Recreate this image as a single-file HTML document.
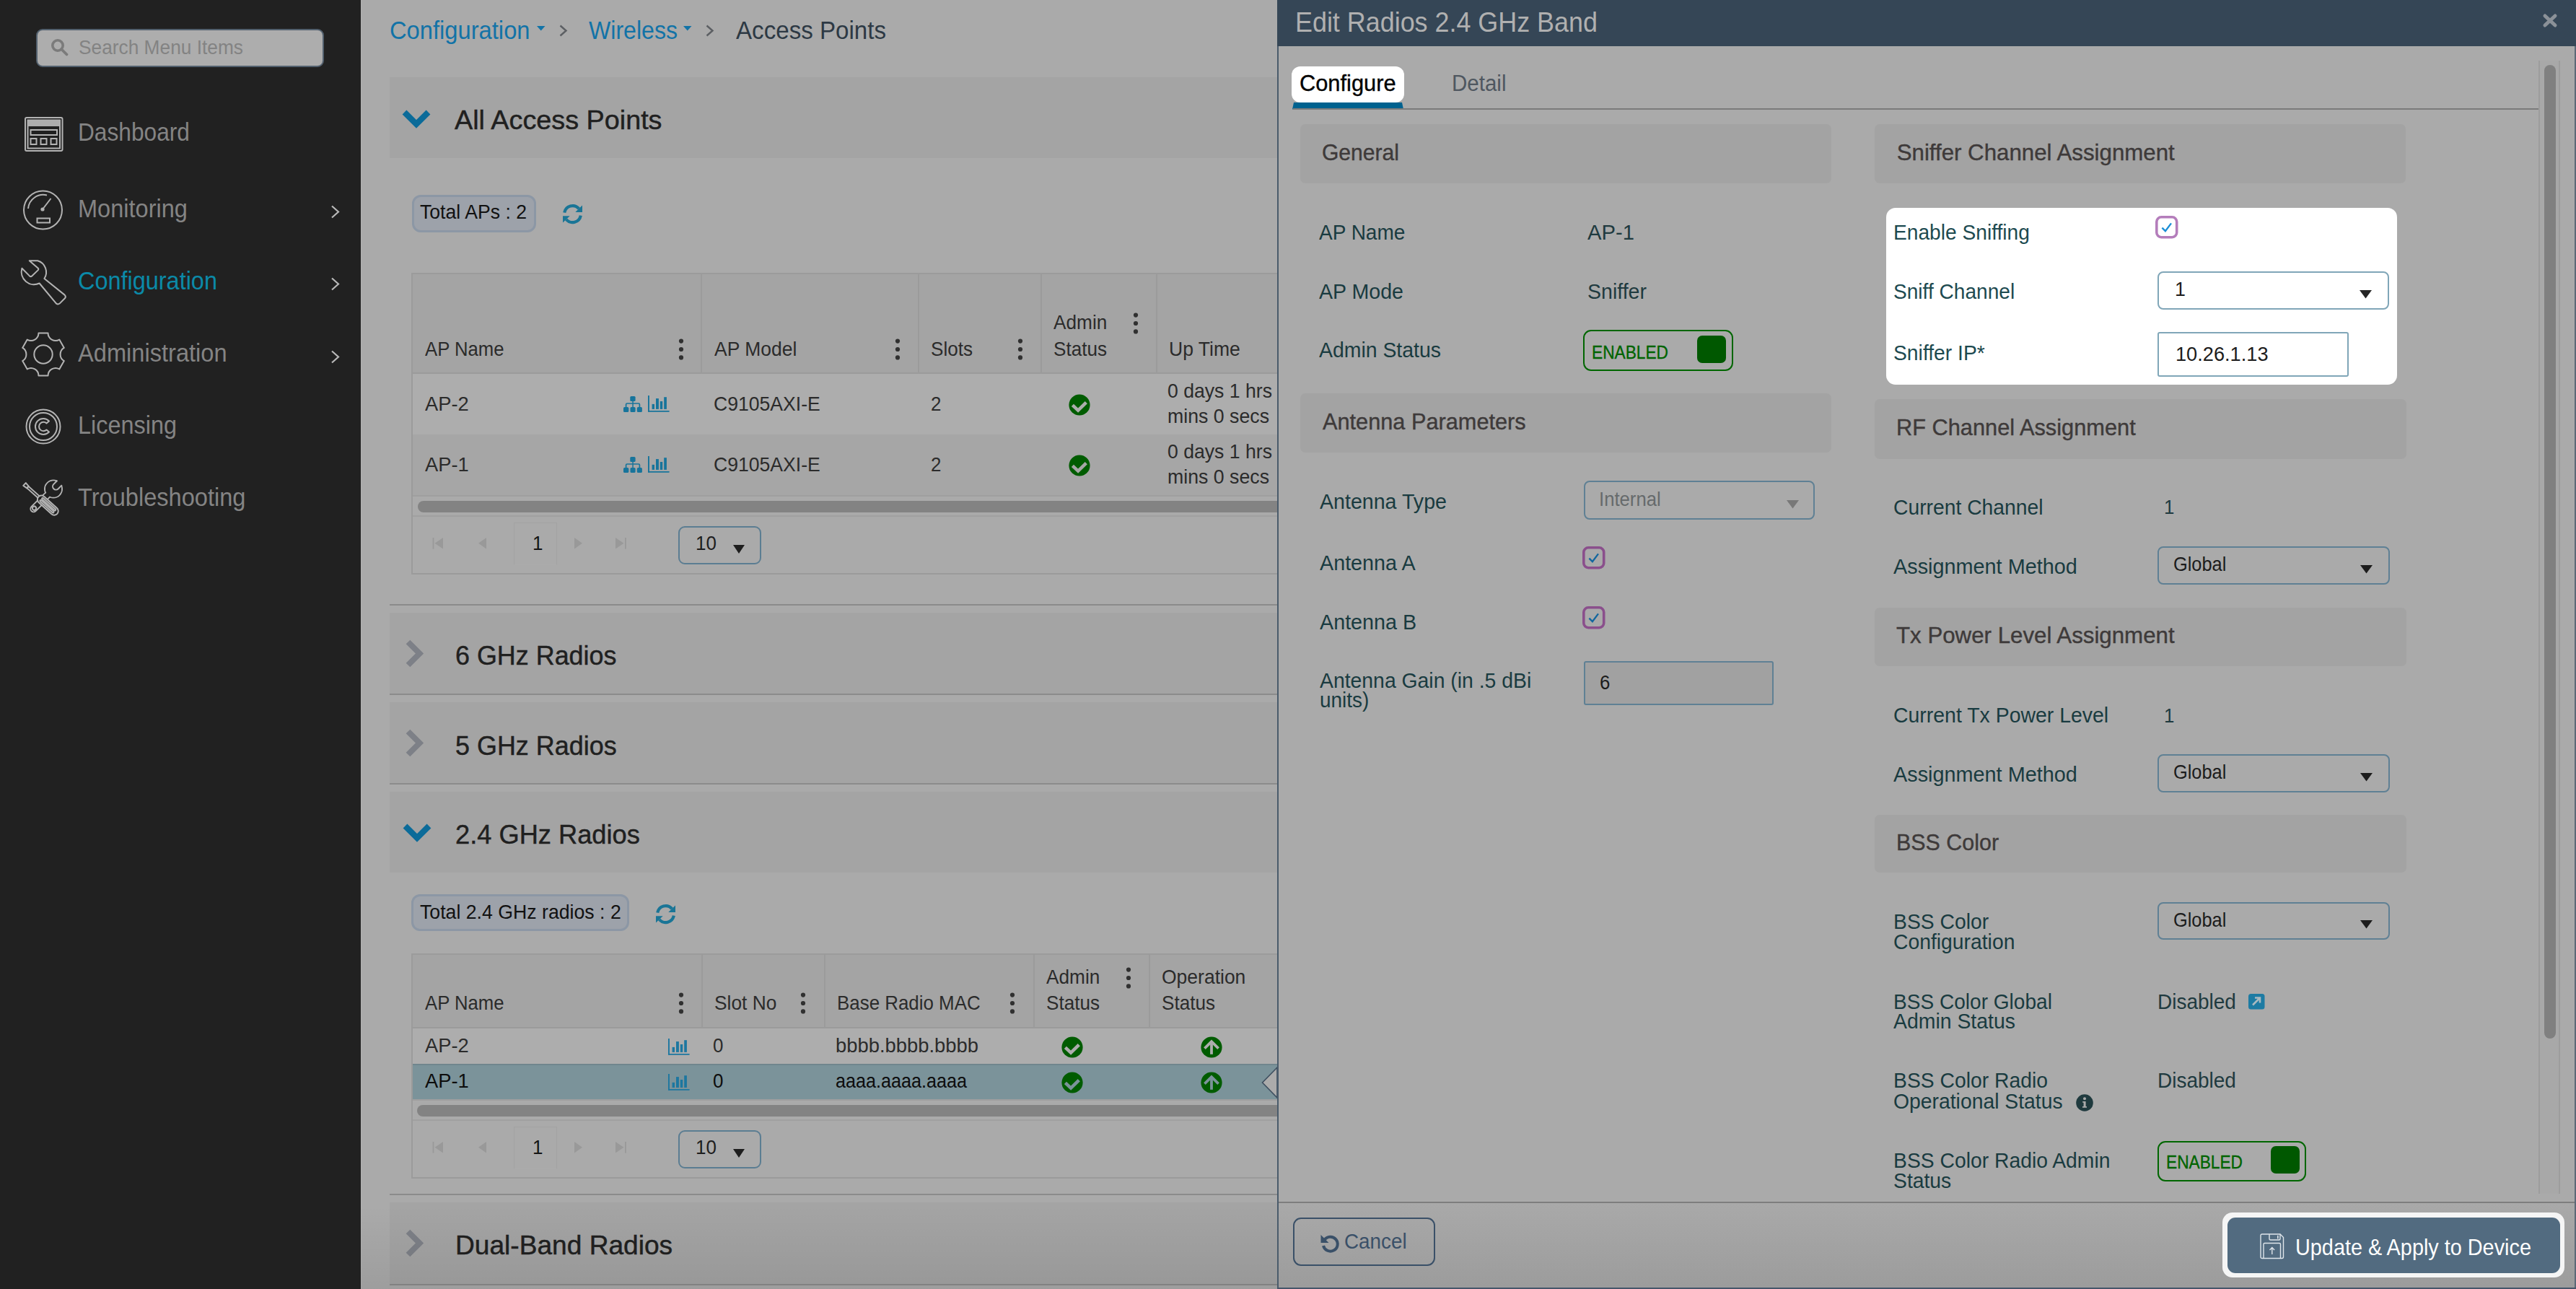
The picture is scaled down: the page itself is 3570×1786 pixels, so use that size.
<!DOCTYPE html>
<html><head><meta charset="utf-8"><title>Edit Radios 2.4 GHz Band</title>
<style>
html,body{margin:0;padding:0;}
body{width:3570px;height:1786px;overflow:hidden;position:relative;background:#aaaaaa;font-family:"Liberation Sans", sans-serif;}
.t{position:absolute;white-space:nowrap;line-height:1;font-family:"Liberation Sans", sans-serif;}
.r{position:absolute;box-sizing:border-box;}
svg.r{overflow:visible;}
</style></head><body>
<div class="r" style="left:0.0px;top:0.0px;width:500.0px;height:1786.0px;background:#212121;"></div>
<div class="r" style="left:50.0px;top:40.0px;width:399.0px;height:53.0px;background:#adadad;border:2px solid #52606e;border-radius:9px;"></div>
<svg class="r" style="left:70.0px;top:53.0px;" width="25.0" height="25.0" viewBox="0 0 25.0 25.0"><circle cx="10" cy="10" r="7.2" fill="none" stroke="#7b7b7b" stroke-width="3.6"/><line x1="15.5" y1="15.5" x2="22.5" y2="22.5" stroke="#7b7b7b" stroke-width="3.8" stroke-linecap="round"/></svg>
<div class="t" style="left:109.0px;top:51.9px;font-size:28.10px;color:#838383;font-weight:400;transform:scaleX(0.9359);transform-origin:0 0;">Search Menu Items</div>
<div class="t" style="left:108.0px;top:166.2px;font-size:34.45px;color:#848484;font-weight:400;transform:scaleX(0.9196);transform-origin:0 0;">Dashboard</div>
<div class="t" style="left:108.0px;top:272.0px;font-size:34.45px;color:#848484;font-weight:400;transform:scaleX(0.9448);transform-origin:0 0;">Monitoring</div>
<div class="t" style="left:108.0px;top:372.0px;font-size:34.45px;color:#0b8aa8;font-weight:400;transform:scaleX(0.9419);transform-origin:0 0;">Configuration</div>
<div class="t" style="left:108.0px;top:471.8px;font-size:34.45px;color:#848484;font-weight:400;transform:scaleX(0.9469);transform-origin:0 0;">Administration</div>
<div class="t" style="left:108.0px;top:571.8px;font-size:34.45px;color:#848484;font-weight:400;transform:scaleX(0.9411);transform-origin:0 0;">Licensing</div>
<div class="t" style="left:108.0px;top:671.8px;font-size:34.45px;color:#848484;font-weight:400;transform:scaleX(0.9460);transform-origin:0 0;">Troubleshooting</div>
<svg class="r" style="left:34.0px;top:162.0px;" width="54.0" height="48.0" viewBox="0 0 54.0 48.0"><rect x="1" y="1" width="51.5" height="46" rx="2" fill="none" stroke="#b3b3b3" stroke-width="2"/><rect x="4.5" y="4.5" width="44.5" height="39" fill="none" stroke="#b3b3b3" stroke-width="2" stroke-width="1.6"/><rect x="4.5" y="4.5" width="44.5" height="8.5" fill="#adadad"/><rect x="8.5" y="18" width="36.5" height="7" fill="none" stroke="#b3b3b3" stroke-width="2" stroke-width="1.6"/><rect x="8.5" y="30" width="8" height="8" fill="none" stroke="#b3b3b3" stroke-width="2" stroke-width="1.6"/><rect x="22.5" y="30" width="8" height="8" fill="none" stroke="#b3b3b3" stroke-width="2" stroke-width="1.6"/><rect x="36.5" y="30" width="8" height="8" fill="none" stroke="#b3b3b3" stroke-width="2" stroke-width="1.6"/></svg>
<svg class="r" style="left:32.0px;top:263.0px;" width="56.0" height="57.0" viewBox="0 0 56.0 57.0"><circle cx="27.5" cy="28" r="26.5" fill="none" stroke="#b3b3b3" stroke-width="2"/><path d="M7 26 A21 21 0 0 1 33 7.5" fill="none" stroke="#b3b3b3" stroke-width="2" stroke-width="2.4"/><line x1="27" y1="27" x2="38.5" y2="12" fill="none" stroke="#b3b3b3" stroke-width="2" stroke-width="2"/><circle cx="27" cy="27" r="2.6" fill="#b3b3b3"/><rect x="19.5" y="39.5" width="17.5" height="6" fill="none" stroke="#b3b3b3" stroke-width="2" stroke-width="2"/></svg>
<svg class="r" style="left:30.0px;top:360.0px;" width="62.0" height="63.0" viewBox="0 0 62.0 63.0"><path d="M10.75 1.2 L22.2 1.2 A16.5 16.5 0 0 1 31.4 26 L59.6 48.6 Q61.8 50.8 60.2 53 L52.6 60.6 Q50.4 62.4 48 60.6 L24.6 32.5 A17.5 17.5 0 0 1 0.4 11.8 L11 22.4 Q12.6 23.9 14.2 22.4 L22.6 14.4 Q24 12.9 22.6 11.5 Z" fill="none" stroke="#b3b3b3" stroke-width="2" stroke-linejoin="round"/></svg>
<svg class="r" style="left:30.0px;top:461.0px;" width="61.0" height="61.0" viewBox="0 0 61.0 61.0"><path d="M23.46 0.52 L36.54 0.52 A10.5 10.5 0 0 0 52.27 9.60 L58.80 20.92 A10.5 10.5 0 0 0 58.80 39.08 L52.27 50.40 A10.5 10.5 0 0 0 36.54 59.48 L23.46 59.48 A10.5 10.5 0 0 0 7.73 50.40 L1.20 39.08 A10.5 10.5 0 0 0 1.20 20.92 L7.73 9.60 A10.5 10.5 0 0 0 23.46 0.52 Z" fill="none" stroke="#b3b3b3" stroke-width="2" stroke-linejoin="round"/><circle cx="30" cy="30" r="12.7" fill="none" stroke="#b3b3b3" stroke-width="2"/></svg>
<svg class="r" style="left:35.0px;top:565.0px;" width="50.0" height="52.0" viewBox="0 0 50.0 52.0"><circle cx="25" cy="26" r="23.5" fill="none" stroke="#b3b3b3" stroke-width="2"/><circle cx="25" cy="26" r="19" fill="none" stroke="#b3b3b3" stroke-width="2" stroke-width="1.8"/><path d="M33 18.5 A11 11 0 1 0 33 33.5 L29.5 30.5 A6.2 6.2 0 1 1 29.5 21.5 Z" fill="none" stroke="#b3b3b3" stroke-width="2" stroke-width="1.8" stroke-linejoin="round"/></svg>
<svg class="r" style="left:32.0px;top:664.0px;" width="56.0" height="53.0" viewBox="0 0 56.0 53.0"><g transform="translate(42,13.6) rotate(135)"><circle cx="0" cy="0" r="12" fill="none" stroke="#b3b3b3" stroke-width="2"/><rect x="6" y="-4.2" width="37" height="8.4" rx="4.2" fill="none" stroke="#b3b3b3" stroke-width="2"/><circle cx="0" cy="0" r="11" fill="#212121"/><rect x="5" y="-3.2" width="37" height="6.4" rx="3.2" fill="#212121"/><path d="M-14 -4.5 L-5 -4.5 A4.5 4.5 0 0 1 -5 4.5 L-14 4.5 Z" fill="#212121"/><path d="M-12.2 -4.5 L-5 -4.5 A4.5 4.5 0 0 1 -5 4.5 L-12.2 4.5" fill="none" stroke="#b3b3b3" stroke-width="2"/><circle cx="37.5" cy="0" r="2.6" fill="none" stroke="#b3b3b3" stroke-width="2" stroke-width="1.8"/></g><g transform="translate(2,7) rotate(42)"><path d="M0 -2.6 L6 -1.8 L6 1.8 L0 2.6 Z" fill="none" stroke="#b3b3b3" stroke-width="2" stroke-linejoin="round"/><rect x="6" y="-1.6" width="22" height="3.2" fill="none" stroke="#b3b3b3" stroke-width="2" stroke-width="1.8"/><rect x="26" y="-5.6" width="35" height="11.2" rx="5.6" fill="#212121" fill="none" stroke="#b3b3b3" stroke-width="2"/><rect x="31" y="-3.2" width="25" height="2.4" rx="1.2" fill="none" stroke="#b3b3b3" stroke-width="2" stroke-width="1.5"/><rect x="31" y="0.8" width="25" height="2.4" rx="1.2" fill="none" stroke="#b3b3b3" stroke-width="2" stroke-width="1.5"/></g></svg>
<svg class="r" style="left:458.0px;top:284.0px;" width="14.0" height="19.0" viewBox="0 0 14.0 19.0"><polyline points="2,1.5 11,9.5 2,17.5" fill="none" stroke="#b9b9b9" stroke-width="2.2"/></svg>
<svg class="r" style="left:458.0px;top:384.0px;" width="14.0" height="19.0" viewBox="0 0 14.0 19.0"><polyline points="2,1.5 11,9.5 2,17.5" fill="none" stroke="#b9b9b9" stroke-width="2.2"/></svg>
<svg class="r" style="left:458.0px;top:485.0px;" width="14.0" height="19.0" viewBox="0 0 14.0 19.0"><polyline points="2,1.5 11,9.5 2,17.5" fill="none" stroke="#b9b9b9" stroke-width="2.2"/></svg>
<div class="r" style="left:500.0px;top:0.0px;width:1.0px;height:1786.0px;background:#b2b2b2;"></div>
<div class="t" style="left:540.0px;top:23.8px;font-size:35.00px;color:#1273a7;font-weight:400;transform:scaleX(0.9343);transform-origin:0 0;">Configuration</div>
<svg class="r" style="left:744.0px;top:36.0px;" width="11.5" height="6.5" viewBox="0 0 11.5 6.5"><polygon points="0,0 11.5,0 5.75,6.5" fill="#1273a7"/></svg>
<svg class="r" style="left:774.0px;top:34.0px;" width="14.0" height="18.0" viewBox="0 0 14.0 18.0"><polyline points="2.5,1.5 10.5,8.5 2.5,15.5" fill="none" stroke="#5c5f63" stroke-width="2.4"/></svg>
<div class="t" style="left:816.0px;top:23.8px;font-size:35.00px;color:#1273a7;font-weight:400;transform:scaleX(0.9166);transform-origin:0 0;">Wireless</div>
<svg class="r" style="left:947.0px;top:36.0px;" width="11.5" height="6.5" viewBox="0 0 11.5 6.5"><polygon points="0,0 11.5,0 5.75,6.5" fill="#1273a7"/></svg>
<svg class="r" style="left:977.0px;top:34.0px;" width="14.0" height="18.0" viewBox="0 0 14.0 18.0"><polyline points="2.5,1.5 10.5,8.5 2.5,15.5" fill="none" stroke="#5c5f63" stroke-width="2.4"/></svg>
<div class="t" style="left:1020.0px;top:23.8px;font-size:35.00px;color:#2d3944;font-weight:400;transform:scaleX(0.9463);transform-origin:0 0;">Access Points</div>
<div class="r" style="left:540.0px;top:107.0px;width:1232.0px;height:112.0px;background:#a4a4a4;"></div>
<svg class="r" style="left:557.0px;top:151.5px;" width="40.0" height="26.0" viewBox="0 0 40.0 26.0"><polyline points="3.5,3.5 20,20 36.5,3.5" fill="none" stroke="#0b6b99" stroke-width="8.2" stroke-linejoin="miter"/></svg>
<div class="t" style="left:630.0px;top:148.2px;font-size:37.60px;color:#202020;font-weight:400;transform:scaleX(1.0048);transform-origin:0 0;-webkit-text-stroke:0.45px #202020;">All Access Points</div>
<div class="r" style="left:571.0px;top:269.5px;width:172.0px;height:52.5px;background:#9da2aa;border:3px solid #8c97a5;border-radius:12px;"></div>
<div class="t" style="left:582.0px;top:280.4px;font-size:28.10px;color:#111;font-weight:400;transform:scaleX(0.9477);transform-origin:0 0;">Total APs : 2</div>
<svg class="r" style="left:779.8px;top:282.9px;" width="27.0" height="27.0" viewBox="0 0 27.0 27.0"><path d="M2.2 11.6 A11.5 11.5 0 0 1 22.3 6.2" fill="none" stroke="#1a7596" stroke-width="4.2"/><path d="M27 1.6 L27 11 L17.3 11 Z" fill="#1a7596"/><path d="M24.8 15.6 A11.5 11.5 0 0 1 4.7 21" fill="none" stroke="#1a7596" stroke-width="4.2"/><path d="M0 25.6 L0 16.2 L9.7 16.2 Z" fill="#1a7596"/></svg>
<div class="r" style="left:570.0px;top:378.0px;width:1202.0px;height:418.0px;border:2px solid #9b9b9b;border-right:none;"></div>
<div class="r" style="left:572.0px;top:380.0px;width:1200.0px;height:137.0px;background:#a4a4a4;"></div>
<div class="r" style="left:572.0px;top:516.0px;width:1200.0px;height:2.0px;background:#9b9b9b;"></div>
<div class="r" style="left:971.0px;top:380.0px;width:2.0px;height:137.0px;background:#9b9b9b;"></div>
<div class="r" style="left:1272.0px;top:380.0px;width:2.0px;height:137.0px;background:#9b9b9b;"></div>
<div class="r" style="left:1441.7px;top:380.0px;width:2.0px;height:137.0px;background:#9b9b9b;"></div>
<div class="r" style="left:1601.7px;top:380.0px;width:2.0px;height:137.0px;background:#9b9b9b;"></div>
<div class="r" style="left:572.0px;top:518.0px;width:1200.0px;height:83.5px;background:#adadad;"></div>
<div class="r" style="left:572.0px;top:601.5px;width:1200.0px;height:84.5px;background:#a6a6a6;"></div>
<div class="t" style="left:588.5px;top:469.6px;font-size:27.60px;color:#2b2b2b;font-weight:400;transform:scaleX(0.9312);transform-origin:0 0;">AP Name</div>
<div class="t" style="left:989.7px;top:469.6px;font-size:27.60px;color:#2b2b2b;font-weight:400;transform:scaleX(0.9591);transform-origin:0 0;">AP Model</div>
<div class="t" style="left:1290.0px;top:469.6px;font-size:27.60px;color:#2b2b2b;font-weight:400;transform:scaleX(0.9453);transform-origin:0 0;">Slots</div>
<div class="t" style="left:1460.0px;top:433.0px;font-size:27.60px;color:#2b2b2b;font-weight:400;transform:scaleX(0.9496);transform-origin:0 0;">Admin</div>
<div class="t" style="left:1460.0px;top:469.6px;font-size:27.60px;color:#2b2b2b;font-weight:400;transform:scaleX(0.9457);transform-origin:0 0;">Status</div>
<div class="t" style="left:1619.6px;top:469.6px;font-size:27.60px;color:#2b2b2b;font-weight:400;transform:scaleX(0.9616);transform-origin:0 0;">Up Time</div>
<svg class="r" style="left:939.7px;top:470.0px;" width="8.0" height="28.0" viewBox="0 0 8.0 28.0"><circle cx="4" cy="2.6" r="3.1" fill="#303030"/><circle cx="4" cy="14" r="3.1" fill="#303030"/><circle cx="4" cy="25.4" r="3.1" fill="#303030"/></svg>
<svg class="r" style="left:1239.7px;top:470.0px;" width="8.0" height="28.0" viewBox="0 0 8.0 28.0"><circle cx="4" cy="2.6" r="3.1" fill="#303030"/><circle cx="4" cy="14" r="3.1" fill="#303030"/><circle cx="4" cy="25.4" r="3.1" fill="#303030"/></svg>
<svg class="r" style="left:1410.0px;top:470.0px;" width="8.0" height="28.0" viewBox="0 0 8.0 28.0"><circle cx="4" cy="2.6" r="3.1" fill="#303030"/><circle cx="4" cy="14" r="3.1" fill="#303030"/><circle cx="4" cy="25.4" r="3.1" fill="#303030"/></svg>
<svg class="r" style="left:1569.6px;top:434.3px;" width="8.0" height="28.0" viewBox="0 0 8.0 28.0"><circle cx="4" cy="2.6" r="3.1" fill="#303030"/><circle cx="4" cy="14" r="3.1" fill="#303030"/><circle cx="4" cy="25.4" r="3.1" fill="#303030"/></svg>
<div class="t" style="left:588.5px;top:545.6px;font-size:27.60px;color:#2b2b2b;font-weight:400;transform:scaleX(0.9909);transform-origin:0 0;">AP-2</div>
<svg class="r" style="left:864.3px;top:548.7px;" width="27.0" height="23.0" viewBox="0 0 27.0 23.0"><rect x="9.3" y="0" width="7.3" height="7.1" rx="1.6" fill="#17749b"/><rect x="0" y="14.9" width="7.3" height="7.1" rx="1.6" fill="#17749b"/><rect x="9.5" y="14.9" width="7.1" height="7.1" rx="1.6" fill="#17749b"/><rect x="18.8" y="14.9" width="7.1" height="7.1" rx="1.6" fill="#17749b"/><rect x="12.3" y="6" width="1.5" height="10" fill="#17749b"/><path d="M3.6 16 L3.6 11.5 Q3.6 10 5 10 L21 10 Q22.4 10 22.4 11.5 L22.4 16" fill="none" stroke="#17749b" stroke-width="1.7"/></svg>
<svg class="r" style="left:898.0px;top:548.0px;" width="30.0" height="23.0" viewBox="0 0 30.0 23.0"><rect x="0" y="0" width="1.9" height="22.7" fill="#17749b"/><rect x="0" y="20.9" width="29.8" height="1.8" rx="0.9" fill="#17749b"/><rect x="5.6" y="11.9" width="3.4" height="7" fill="#17749b"/><rect x="11" y="4.1" width="3.9" height="14.8" fill="#17749b"/><rect x="16.8" y="8" width="3.4" height="10.9" fill="#17749b"/><rect x="22.2" y="2.2" width="3.7" height="16.7" fill="#17749b"/></svg>
<div class="t" style="left:989.0px;top:545.6px;font-size:27.60px;color:#2b2b2b;font-weight:400;transform:scaleX(0.9634);transform-origin:0 0;">C9105AXI-E</div>
<div class="t" style="left:1290.0px;top:545.6px;font-size:27.60px;color:#2b2b2b;font-weight:400;transform:scaleX(0.9400);transform-origin:0 0;">2</div>
<svg class="r" style="left:1480.0px;top:544.5px;" width="32.0" height="32.0" viewBox="0 0 32.0 32.0"><circle cx="16" cy="16" r="14.6" fill="#005c00"/><polyline points="6.4,16.3 14.1,23.6 25.3,12.7" fill="none" stroke="#adadad" stroke-width="4.6"/></svg>
<div class="t" style="left:1618.0px;top:528.4px;font-size:27.60px;color:#2b2b2b;font-weight:400;transform:scaleX(0.9645);transform-origin:0 0;">0 days 1 hrs</div>
<div class="t" style="left:1618.0px;top:562.6px;font-size:27.60px;color:#2b2b2b;font-weight:400;transform:scaleX(0.9678);transform-origin:0 0;">mins 0 secs</div>
<div class="t" style="left:588.5px;top:629.6px;font-size:27.60px;color:#2b2b2b;font-weight:400;transform:scaleX(0.9909);transform-origin:0 0;">AP-1</div>
<svg class="r" style="left:864.3px;top:632.7px;" width="27.0" height="23.0" viewBox="0 0 27.0 23.0"><rect x="9.3" y="0" width="7.3" height="7.1" rx="1.6" fill="#17749b"/><rect x="0" y="14.9" width="7.3" height="7.1" rx="1.6" fill="#17749b"/><rect x="9.5" y="14.9" width="7.1" height="7.1" rx="1.6" fill="#17749b"/><rect x="18.8" y="14.9" width="7.1" height="7.1" rx="1.6" fill="#17749b"/><rect x="12.3" y="6" width="1.5" height="10" fill="#17749b"/><path d="M3.6 16 L3.6 11.5 Q3.6 10 5 10 L21 10 Q22.4 10 22.4 11.5 L22.4 16" fill="none" stroke="#17749b" stroke-width="1.7"/></svg>
<svg class="r" style="left:898.0px;top:632.0px;" width="30.0" height="23.0" viewBox="0 0 30.0 23.0"><rect x="0" y="0" width="1.9" height="22.7" fill="#17749b"/><rect x="0" y="20.9" width="29.8" height="1.8" rx="0.9" fill="#17749b"/><rect x="5.6" y="11.9" width="3.4" height="7" fill="#17749b"/><rect x="11" y="4.1" width="3.9" height="14.8" fill="#17749b"/><rect x="16.8" y="8" width="3.4" height="10.9" fill="#17749b"/><rect x="22.2" y="2.2" width="3.7" height="16.7" fill="#17749b"/></svg>
<div class="t" style="left:989.0px;top:629.6px;font-size:27.60px;color:#2b2b2b;font-weight:400;transform:scaleX(0.9634);transform-origin:0 0;">C9105AXI-E</div>
<div class="t" style="left:1290.0px;top:629.6px;font-size:27.60px;color:#2b2b2b;font-weight:400;transform:scaleX(0.9400);transform-origin:0 0;">2</div>
<svg class="r" style="left:1480.0px;top:628.5px;" width="32.0" height="32.0" viewBox="0 0 32.0 32.0"><circle cx="16" cy="16" r="14.6" fill="#005c00"/><polyline points="6.4,16.3 14.1,23.6 25.3,12.7" fill="none" stroke="#a6a6a6" stroke-width="4.6"/></svg>
<div class="t" style="left:1618.0px;top:612.4px;font-size:27.60px;color:#2b2b2b;font-weight:400;transform:scaleX(0.9645);transform-origin:0 0;">0 days 1 hrs</div>
<div class="t" style="left:1618.0px;top:646.6px;font-size:27.60px;color:#2b2b2b;font-weight:400;transform:scaleX(0.9678);transform-origin:0 0;">mins 0 secs</div>
<div class="r" style="left:572.0px;top:686.0px;width:1200.0px;height:2.0px;background:#9f9f9f;"></div>
<div class="r" style="left:578.5px;top:694.0px;width:1193.5px;height:16.0px;background:#838383;border-radius:8px 0 0 8px;"></div>
<div class="r" style="left:572.0px;top:714.0px;width:1200.0px;height:2.0px;background:#a0a0a0;"></div>
<svg class="r" style="left:599.0px;top:745.0px;" width="16.0" height="16.0" viewBox="0 0 16.0 16.0"><rect x="0.6" y="0" width="1.8" height="15.6" fill="#999999"/><polygon points="15,0 3.5,7.8 15,15.6" fill="#999999"/></svg>
<svg class="r" style="left:663.0px;top:745.0px;" width="12.0" height="16.0" viewBox="0 0 12.0 16.0"><polygon points="11,0 0,7.8 11,15.6" fill="#999999"/></svg>
<div class="r" style="left:712.0px;top:724.0px;width:59.5px;height:59.0px;border:1px solid #a2a2a2;border-bottom-color:#acacac;"></div>
<div class="t" style="left:737.5px;top:738.6px;font-size:27.60px;color:#151515;font-weight:400;transform:scaleX(0.9400);transform-origin:0 0;">1</div>
<svg class="r" style="left:796.0px;top:745.0px;" width="12.0" height="16.0" viewBox="0 0 12.0 16.0"><polygon points="0,0 11,7.8 0,15.6" fill="#999999"/></svg>
<svg class="r" style="left:853.0px;top:745.0px;" width="16.0" height="16.0" viewBox="0 0 16.0 16.0"><polygon points="0,0 11.5,7.8 0,15.6" fill="#999999"/><rect x="13" y="0" width="1.8" height="15.6" fill="#999999"/></svg>
<div class="r" style="left:939.5px;top:729.0px;width:115.5px;height:53.0px;border:2px solid #5b7d92;border-radius:9px;"></div>
<div class="t" style="left:963.6px;top:739.0px;font-size:27.60px;color:#1e1e1e;font-weight:400;transform:scaleX(0.9400);transform-origin:0 0;">10</div>
<svg class="r" style="left:1016.0px;top:755.0px;" width="16.0" height="12.0" viewBox="0 0 16.0 12.0"><polygon points="0,0 16,0 8.0,12" fill="#1e1e1e"/></svg>
<div class="r" style="left:540.0px;top:837.0px;width:1232.0px;height:2.0px;background:#8b8b8b;"></div>
<div class="r" style="left:540.0px;top:849.0px;width:1232.0px;height:112.0px;background:#a4a4a4;"></div>
<div class="r" style="left:540.0px;top:961.0px;width:1232.0px;height:2.0px;background:#8b8b8b;"></div>
<svg class="r" style="left:562.0px;top:886.0px;" width="26.0" height="40.0" viewBox="0 0 26.0 40.0"><polyline points="3.5,3.5 19.5,19.5 3.5,35.5" fill="none" stroke="#7d8087" stroke-width="8" stroke-linejoin="miter"/></svg>
<div class="t" style="left:631.4px;top:890.2px;font-size:37.60px;color:#202020;font-weight:400;transform:scaleX(0.9553);transform-origin:0 0;-webkit-text-stroke:0.45px #202020;">6 GHz Radios</div>
<div class="r" style="left:540.0px;top:973.0px;width:1232.0px;height:112.0px;background:#a4a4a4;"></div>
<div class="r" style="left:540.0px;top:1085.0px;width:1232.0px;height:2.0px;background:#8b8b8b;"></div>
<svg class="r" style="left:562.0px;top:1010.0px;" width="26.0" height="40.0" viewBox="0 0 26.0 40.0"><polyline points="3.5,3.5 19.5,19.5 3.5,35.5" fill="none" stroke="#7d8087" stroke-width="8" stroke-linejoin="miter"/></svg>
<div class="t" style="left:631.0px;top:1014.5px;font-size:37.60px;color:#202020;font-weight:400;transform:scaleX(0.9561);transform-origin:0 0;-webkit-text-stroke:0.45px #202020;">5 GHz Radios</div>
<div class="r" style="left:540.0px;top:1097.0px;width:1232.0px;height:112.0px;background:#a4a4a4;"></div>
<svg class="r" style="left:557.6px;top:1141.0px;" width="40.0" height="26.0" viewBox="0 0 40.0 26.0"><polyline points="3.5,3.5 20,20 36.5,3.5" fill="none" stroke="#0b6b99" stroke-width="8.2" stroke-linejoin="miter"/></svg>
<div class="t" style="left:631.0px;top:1138.0px;font-size:37.60px;color:#202020;font-weight:400;transform:scaleX(0.9646);transform-origin:0 0;-webkit-text-stroke:0.45px #202020;">2.4 GHz Radios</div>
<div class="r" style="left:570.0px;top:1238.6px;width:302.4px;height:51.7px;background:#9da2aa;border:3px solid #8c97a5;border-radius:12px;"></div>
<div class="t" style="left:581.7px;top:1250.0px;font-size:28.10px;color:#111;font-weight:400;transform:scaleX(0.9495);transform-origin:0 0;">Total 2.4 GHz radios : 2</div>
<svg class="r" style="left:908.5px;top:1252.5px;" width="27.0" height="27.0" viewBox="0 0 27.0 27.0"><path d="M2.2 11.6 A11.5 11.5 0 0 1 22.3 6.2" fill="none" stroke="#1a7596" stroke-width="4.2"/><path d="M27 1.6 L27 11 L17.3 11 Z" fill="#1a7596"/><path d="M24.8 15.6 A11.5 11.5 0 0 1 4.7 21" fill="none" stroke="#1a7596" stroke-width="4.2"/><path d="M0 25.6 L0 16.2 L9.7 16.2 Z" fill="#1a7596"/></svg>
<div class="r" style="left:570.0px;top:1321.4px;width:1202.0px;height:311.6px;border:2px solid #9b9b9b;border-right:none;"></div>
<div class="r" style="left:572.0px;top:1323.4px;width:1200.0px;height:100.3px;background:#a4a4a4;"></div>
<div class="r" style="left:572.0px;top:1422.7px;width:1200.0px;height:2.0px;background:#9b9b9b;"></div>
<div class="r" style="left:971.8px;top:1323.4px;width:2.0px;height:100.3px;background:#9b9b9b;"></div>
<div class="r" style="left:1141.5px;top:1323.4px;width:2.0px;height:100.3px;background:#9b9b9b;"></div>
<div class="r" style="left:1431.7px;top:1323.4px;width:2.0px;height:100.3px;background:#9b9b9b;"></div>
<div class="r" style="left:1591.7px;top:1323.4px;width:2.0px;height:100.3px;background:#9b9b9b;"></div>
<div class="r" style="left:572.0px;top:1424.7px;width:1200.0px;height:49.3px;background:#adadad;"></div>
<div class="r" style="left:572.0px;top:1474.0px;width:1200.0px;height:49.0px;background:#7b939a;"></div>
<div class="r" style="left:572.0px;top:1474.0px;width:1200.0px;height:1.5px;background:#70868d;"></div>
<div class="t" style="left:588.5px;top:1375.6px;font-size:27.60px;color:#2b2b2b;font-weight:400;transform:scaleX(0.9312);transform-origin:0 0;">AP Name</div>
<div class="t" style="left:989.7px;top:1375.6px;font-size:27.60px;color:#2b2b2b;font-weight:400;transform:scaleX(0.9536);transform-origin:0 0;">Slot No</div>
<div class="t" style="left:1160.0px;top:1375.6px;font-size:27.60px;color:#2b2b2b;font-weight:400;transform:scaleX(0.9388);transform-origin:0 0;">Base Radio MAC</div>
<div class="t" style="left:1450.0px;top:1340.0px;font-size:27.60px;color:#2b2b2b;font-weight:400;transform:scaleX(0.9496);transform-origin:0 0;">Admin</div>
<div class="t" style="left:1450.0px;top:1375.6px;font-size:27.60px;color:#2b2b2b;font-weight:400;transform:scaleX(0.9457);transform-origin:0 0;">Status</div>
<div class="t" style="left:1609.6px;top:1340.0px;font-size:27.60px;color:#2b2b2b;font-weight:400;transform:scaleX(0.9601);transform-origin:0 0;">Operation</div>
<div class="t" style="left:1609.6px;top:1375.6px;font-size:27.60px;color:#2b2b2b;font-weight:400;transform:scaleX(0.9457);transform-origin:0 0;">Status</div>
<svg class="r" style="left:939.7px;top:1376.0px;" width="8.0" height="28.0" viewBox="0 0 8.0 28.0"><circle cx="4" cy="2.6" r="3.1" fill="#303030"/><circle cx="4" cy="14" r="3.1" fill="#303030"/><circle cx="4" cy="25.4" r="3.1" fill="#303030"/></svg>
<svg class="r" style="left:1109.4px;top:1376.0px;" width="8.0" height="28.0" viewBox="0 0 8.0 28.0"><circle cx="4" cy="2.6" r="3.1" fill="#303030"/><circle cx="4" cy="14" r="3.1" fill="#303030"/><circle cx="4" cy="25.4" r="3.1" fill="#303030"/></svg>
<svg class="r" style="left:1399.4px;top:1376.0px;" width="8.0" height="28.0" viewBox="0 0 8.0 28.0"><circle cx="4" cy="2.6" r="3.1" fill="#303030"/><circle cx="4" cy="14" r="3.1" fill="#303030"/><circle cx="4" cy="25.4" r="3.1" fill="#303030"/></svg>
<svg class="r" style="left:1559.7px;top:1341.0px;" width="8.0" height="28.0" viewBox="0 0 8.0 28.0"><circle cx="4" cy="2.6" r="3.1" fill="#303030"/><circle cx="4" cy="14" r="3.1" fill="#303030"/><circle cx="4" cy="25.4" r="3.1" fill="#303030"/></svg>
<div class="t" style="left:588.5px;top:1435.1px;font-size:27.60px;color:#2b2b2b;font-weight:400;transform:scaleX(0.9909);transform-origin:0 0;">AP-2</div>
<svg class="r" style="left:926.0px;top:1438.5px;" width="30.0" height="23.0" viewBox="0 0 30.0 23.0"><rect x="0" y="0" width="1.9" height="22.7" fill="#1c77a0"/><rect x="0" y="20.9" width="29.8" height="1.8" rx="0.9" fill="#1c77a0"/><rect x="5.6" y="11.9" width="3.4" height="7" fill="#1c77a0"/><rect x="11" y="4.1" width="3.9" height="14.8" fill="#1c77a0"/><rect x="16.8" y="8" width="3.4" height="10.9" fill="#1c77a0"/><rect x="22.2" y="2.2" width="3.7" height="16.7" fill="#1c77a0"/></svg>
<div class="t" style="left:988.4px;top:1435.1px;font-size:27.60px;color:#2b2b2b;font-weight:400;transform:scaleX(0.9400);transform-origin:0 0;">0</div>
<div class="t" style="left:1158.0px;top:1435.1px;font-size:27.60px;color:#2b2b2b;font-weight:400;transform:scaleX(0.9924);transform-origin:0 0;">bbbb.bbbb.bbbb</div>
<svg class="r" style="left:1470.3px;top:1434.5px;" width="32.0" height="32.0" viewBox="0 0 32.0 32.0"><circle cx="16" cy="16" r="14.6" fill="#005c00"/><polyline points="6.4,16.3 14.1,23.6 25.3,12.7" fill="none" stroke="#adadad" stroke-width="4.6"/></svg>
<svg class="r" style="left:1663.2px;top:1434.5px;" width="32.0" height="32.0" viewBox="0 0 32.0 32.0"><circle cx="16" cy="16" r="14.6" fill="#005c00"/><polyline points="6.4,17.6 16,8.2 25.6,17.6" fill="none" stroke="#adadad" stroke-width="3.8"/><line x1="16" y1="9" x2="16" y2="25.8" stroke="#adadad" stroke-width="3.8"/></svg>
<div class="t" style="left:588.5px;top:1484.3px;font-size:27.60px;color:#0d0d0d;font-weight:400;transform:scaleX(0.9909);transform-origin:0 0;">AP-1</div>
<svg class="r" style="left:926.0px;top:1487.7px;" width="30.0" height="23.0" viewBox="0 0 30.0 23.0"><rect x="0" y="0" width="1.9" height="22.7" fill="#1c77a0"/><rect x="0" y="20.9" width="29.8" height="1.8" rx="0.9" fill="#1c77a0"/><rect x="5.6" y="11.9" width="3.4" height="7" fill="#1c77a0"/><rect x="11" y="4.1" width="3.9" height="14.8" fill="#1c77a0"/><rect x="16.8" y="8" width="3.4" height="10.9" fill="#1c77a0"/><rect x="22.2" y="2.2" width="3.7" height="16.7" fill="#1c77a0"/></svg>
<div class="t" style="left:988.4px;top:1484.3px;font-size:27.60px;color:#0d0d0d;font-weight:400;transform:scaleX(0.9400);transform-origin:0 0;">0</div>
<div class="t" style="left:1158.0px;top:1484.3px;font-size:27.60px;color:#0d0d0d;font-weight:400;transform:scaleX(0.9120);transform-origin:0 0;">aaaa.aaaa.aaaa</div>
<svg class="r" style="left:1470.3px;top:1483.7px;" width="32.0" height="32.0" viewBox="0 0 32.0 32.0"><circle cx="16" cy="16" r="14.6" fill="#005c00"/><polyline points="6.4,16.3 14.1,23.6 25.3,12.7" fill="none" stroke="#7b939a" stroke-width="4.6"/></svg>
<svg class="r" style="left:1663.2px;top:1483.7px;" width="32.0" height="32.0" viewBox="0 0 32.0 32.0"><circle cx="16" cy="16" r="14.6" fill="#005c00"/><polyline points="6.4,17.6 16,8.2 25.6,17.6" fill="none" stroke="#7b939a" stroke-width="3.8"/><line x1="16" y1="9" x2="16" y2="25.8" stroke="#7b939a" stroke-width="3.8"/></svg>
<svg class="r" style="left:1748.0px;top:1478.0px;" width="24.0" height="45.0" viewBox="0 0 24.0 45.0"><polygon points="22,1 1.5,22 22,43" fill="#ababab" stroke="#3e4f60" stroke-width="1.6"/></svg>
<div class="r" style="left:572.0px;top:1523.0px;width:1200.0px;height:2.0px;background:#9f9f9f;"></div>
<div class="r" style="left:578.0px;top:1531.0px;width:1194.0px;height:16.0px;background:#838383;border-radius:8px 0 0 8px;"></div>
<div class="r" style="left:572.0px;top:1551.0px;width:1200.0px;height:2.0px;background:#a0a0a0;"></div>
<svg class="r" style="left:599.0px;top:1582.3px;" width="16.0" height="16.0" viewBox="0 0 16.0 16.0"><rect x="0.6" y="0" width="1.8" height="15.6" fill="#999999"/><polygon points="15,0 3.5,7.8 15,15.6" fill="#999999"/></svg>
<svg class="r" style="left:663.0px;top:1582.3px;" width="12.0" height="16.0" viewBox="0 0 12.0 16.0"><polygon points="11,0 0,7.8 11,15.6" fill="#999999"/></svg>
<div class="r" style="left:712.0px;top:1561.3px;width:59.5px;height:59.0px;border:1px solid #a2a2a2;border-bottom-color:#acacac;"></div>
<div class="t" style="left:737.5px;top:1575.9px;font-size:27.60px;color:#151515;font-weight:400;transform:scaleX(0.9400);transform-origin:0 0;">1</div>
<svg class="r" style="left:796.0px;top:1582.3px;" width="12.0" height="16.0" viewBox="0 0 12.0 16.0"><polygon points="0,0 11,7.8 0,15.6" fill="#999999"/></svg>
<svg class="r" style="left:853.0px;top:1582.3px;" width="16.0" height="16.0" viewBox="0 0 16.0 16.0"><polygon points="0,0 11.5,7.8 0,15.6" fill="#999999"/><rect x="13" y="0" width="1.8" height="15.6" fill="#999999"/></svg>
<div class="r" style="left:939.5px;top:1566.3px;width:115.5px;height:53.0px;border:2px solid #5b7d92;border-radius:9px;"></div>
<div class="t" style="left:963.6px;top:1576.3px;font-size:27.60px;color:#1e1e1e;font-weight:400;transform:scaleX(0.9400);transform-origin:0 0;">10</div>
<svg class="r" style="left:1016.0px;top:1592.3px;" width="16.0" height="12.0" viewBox="0 0 16.0 12.0"><polygon points="0,0 16,0 8.0,12" fill="#1e1e1e"/></svg>
<div class="r" style="left:540.0px;top:1654.0px;width:1232.0px;height:2.0px;background:#8b8b8b;"></div>
<div class="r" style="left:540.0px;top:1666.0px;width:1232.0px;height:112.5px;background:#a4a4a4;"></div>
<div class="r" style="left:540.0px;top:1778.5px;width:1232.0px;height:2.0px;background:#8b8b8b;"></div>
<svg class="r" style="left:562.0px;top:1703.0px;" width="26.0" height="40.0" viewBox="0 0 26.0 40.0"><polyline points="3.5,3.5 19.5,19.5 3.5,35.5" fill="none" stroke="#7d8087" stroke-width="8" stroke-linejoin="miter"/></svg>
<div class="t" style="left:631.0px;top:1707.2px;font-size:37.60px;color:#202020;font-weight:400;transform:scaleX(0.9875);transform-origin:0 0;-webkit-text-stroke:0.45px #202020;">Dual-Band Radios</div>
<div class="r" style="left:500.0px;top:1670.0px;width:1270.0px;height:116.0px;background:linear-gradient(to bottom, rgba(0,0,0,0), rgba(0,0,0,0.075));"></div>
<div class="r" style="left:1770.0px;top:0.0px;width:1800.0px;height:1786.0px;background:#aaaaaa;"></div>
<div class="r" style="left:1770.0px;top:0.0px;width:2.0px;height:1786.0px;background:#4a5b6b;"></div>
<div class="r" style="left:3567.5px;top:63.0px;width:2.5px;height:1723.0px;background:#5b6876;"></div>
<div class="r" style="left:1770.0px;top:1783.5px;width:1800.0px;height:2.5px;background:#46566a;"></div>
<div class="r" style="left:1770.0px;top:0.0px;width:1800.0px;height:63.5px;background:#354656;"></div>
<div class="t" style="left:1795.3px;top:12.1px;font-size:38.50px;color:#b0b0b0;font-weight:400;transform:scaleX(0.9322);transform-origin:0 0;">Edit Radios 2.4 GHz Band</div>
<svg class="r" style="left:3524.0px;top:19.0px;" width="20.0" height="19.0" viewBox="0 0 20.0 19.0"><path d="M3 3 L17 16 M17 3 L3 16" stroke="#8b9198" stroke-width="5" stroke-linecap="round"/></svg>
<div class="r" style="left:1790.0px;top:92.0px;width:156.0px;height:49.6px;background:#ffffff;border-radius:12px;"></div>
<div class="t" style="left:1801.0px;top:100.9px;font-size:30.80px;color:#000;font-weight:400;-webkit-text-stroke:0.35px #000;">Configure</div>
<svg class="r" style="left:1791.0px;top:141.5px;" width="154.0" height="9.5" viewBox="0 0 154.0 9.5"><polygon points="2,0 152,0 154,9.5 0,9.5" fill="#00628f"/></svg>
<div class="r" style="left:1792.0px;top:150.0px;width:1726.0px;height:2.0px;background:#7b7b7b;"></div>
<div class="t" style="left:2012.0px;top:100.9px;font-size:30.80px;color:#4f5760;font-weight:400;transform:scaleX(0.9588);transform-origin:0 0;">Detail</div>
<div class="r" style="left:3518.0px;top:84.0px;width:30.0px;height:1569.5px;background:#a8a8a8;border-left:2px solid #9d9d9d;border-right:2px solid #9d9d9d;"></div>
<div class="r" style="left:3526.0px;top:89.7px;width:16.0px;height:1349.1px;background:#808080;border-radius:8px;"></div>
<div class="r" style="left:1801.7px;top:172.0px;width:736.3px;height:82.0px;background:#a3a3a3;border-radius:7px;"></div>
<div class="t" style="left:1832.0px;top:195.5px;font-size:31.25px;color:#3e3a3a;font-weight:400;transform:scaleX(0.9616);transform-origin:0 0;-webkit-text-stroke:0.4px #3e3a3a;">General</div>
<div class="t" style="left:1828.4px;top:307.2px;font-size:29.65px;color:#193b40;font-weight:400;transform:scaleX(0.9450);transform-origin:0 0;">AP Name</div>
<div class="t" style="left:2200.0px;top:307.2px;font-size:29.65px;color:#1f3a3f;font-weight:400;transform:scaleX(0.9862);transform-origin:0 0;">AP-1</div>
<div class="t" style="left:1828.4px;top:388.9px;font-size:29.65px;color:#193b40;font-weight:400;transform:scaleX(0.9636);transform-origin:0 0;">AP Mode</div>
<div class="t" style="left:2200.0px;top:388.9px;font-size:29.65px;color:#1f3a3f;font-weight:400;transform:scaleX(0.9629);transform-origin:0 0;">Sniffer</div>
<div class="t" style="left:1828.4px;top:470.1px;font-size:29.65px;color:#193b40;font-weight:400;transform:scaleX(0.9585);transform-origin:0 0;">Admin Status</div>
<div class="r" style="left:2194.0px;top:457.4px;width:207.6px;height:57.0px;border:2.5px solid #006600;border-radius:11px;"></div>
<div class="t" style="left:2206.0px;top:476.3px;font-size:25.60px;color:#006400;font-weight:400;transform:scaleX(0.8867);transform-origin:0 0;-webkit-text-stroke:0.35px #006400;">ENABLED</div>
<div class="r" style="left:2352.0px;top:464.8px;width:40.0px;height:37.8px;background:#005800;border-radius:7px;"></div>
<div class="r" style="left:1801.7px;top:545.3px;width:736.3px;height:81.3px;background:#a3a3a3;border-radius:7px;"></div>
<div class="t" style="left:1832.8px;top:568.5px;font-size:31.25px;color:#3e3a3a;font-weight:400;transform:scaleX(0.9827);transform-origin:0 0;-webkit-text-stroke:0.4px #3e3a3a;">Antenna Parameters</div>
<div class="t" style="left:1828.5px;top:679.7px;font-size:29.65px;color:#193b40;font-weight:400;transform:scaleX(0.9646);transform-origin:0 0;">Antenna Type</div>
<div class="r" style="left:2194.8px;top:666.4px;width:320.2px;height:53.6px;border:2px solid #5f8094;border-radius:8px;"></div>
<div class="t" style="left:2215.5px;top:676.9px;font-size:28.50px;color:#666a6c;font-weight:400;transform:scaleX(0.9014);transform-origin:0 0;">Internal</div>
<svg class="r" style="left:2476.0px;top:693.0px;" width="17.0" height="11.5" viewBox="0 0 17.0 11.5"><polygon points="0,0 17,0 8.5,11.5" fill="#787878"/></svg>
<div class="t" style="left:1828.5px;top:764.9px;font-size:29.65px;color:#193b40;font-weight:400;transform:scaleX(0.9690);transform-origin:0 0;">Antenna A</div>
<svg class="r" style="left:2192.5px;top:757.3px;" width="31.5" height="31.5" viewBox="0 0 31.5 31.5"><rect x="1.8" y="1.8" width="27.9" height="27.9" rx="6.5" fill="none" stroke="#8a4f8c" stroke-width="3.6"/><polyline points="9.4,16.7 13.9,21.1 22.0,10.4" fill="none" stroke="#13679e" stroke-width="2.4"/></svg>
<div class="t" style="left:1828.5px;top:847.3px;font-size:29.65px;color:#193b40;font-weight:400;transform:scaleX(0.9690);transform-origin:0 0;">Antenna B</div>
<svg class="r" style="left:2192.5px;top:839.5px;" width="31.5" height="31.5" viewBox="0 0 31.5 31.5"><rect x="1.8" y="1.8" width="27.9" height="27.9" rx="6.5" fill="none" stroke="#8a4f8c" stroke-width="3.6"/><polyline points="9.4,16.7 13.9,21.1 22.0,10.4" fill="none" stroke="#13679e" stroke-width="2.4"/></svg>
<div class="t" style="left:1828.5px;top:927.9px;font-size:29.65px;color:#193b40;font-weight:400;transform:scaleX(0.9568);transform-origin:0 0;">Antenna Gain (in .5 dBi</div>
<div class="t" style="left:1828.5px;top:954.9px;font-size:29.65px;color:#193b40;font-weight:400;transform:scaleX(0.9433);transform-origin:0 0;">units)</div>
<div class="r" style="left:2194.8px;top:915.7px;width:263.2px;height:61.3px;background:#a1a1a1;border:2px solid #5f8094;border-radius:3px;"></div>
<div class="t" style="left:2217.0px;top:932.2px;font-size:27.50px;color:#1c1c1c;font-weight:400;transform:scaleX(0.9400);transform-origin:0 0;">6</div>
<div class="r" style="left:2598.0px;top:172.4px;width:736.0px;height:82.0px;background:#a3a3a3;border-radius:7px;"></div>
<div class="t" style="left:2628.7px;top:196.0px;font-size:31.25px;color:#3e3a3a;font-weight:400;-webkit-text-stroke:0.4px #3e3a3a;">Sniffer Channel Assignment</div>
<div class="r" style="left:2614.0px;top:288.3px;width:708.0px;height:244.9px;background:#ffffff;border-radius:13px;"></div>
<div class="t" style="left:2624.2px;top:306.6px;font-size:29.65px;color:#1d4a50;font-weight:400;transform:scaleX(0.9501);transform-origin:0 0;">Enable Sniffing</div>
<svg class="r" style="left:2987.0px;top:299.0px;" width="31.5" height="31.5" viewBox="0 0 31.5 31.5"><rect x="1.8" y="1.8" width="27.9" height="27.9" rx="6.5" fill="none" stroke="#b47dbb" stroke-width="3.6"/><polyline points="9.4,16.7 13.9,21.1 22.0,10.4" fill="none" stroke="#1b8fd6" stroke-width="2.4"/></svg>
<div class="t" style="left:2624.2px;top:388.6px;font-size:29.65px;color:#1d4a50;font-weight:400;transform:scaleX(0.9477);transform-origin:0 0;">Sniff Channel</div>
<div class="r" style="left:2989.5px;top:376.0px;width:321.5px;height:53.0px;border:2px solid #80a6b8;border-radius:8px;"></div>
<div class="t" style="left:3013.5px;top:385.9px;font-size:28.50px;color:#1c1c1c;font-weight:400;transform:scaleX(0.9400);transform-origin:0 0;">1</div>
<svg class="r" style="left:3270.0px;top:402.0px;" width="17.0" height="11.5" viewBox="0 0 17.0 11.5"><polygon points="0,0 17,0 8.5,11.5" fill="#262626"/></svg>
<div class="t" style="left:2624.2px;top:473.6px;font-size:29.65px;color:#1d4a50;font-weight:400;transform:scaleX(0.9545);transform-origin:0 0;">Sniffer IP*</div>
<div class="r" style="left:2989.5px;top:460.0px;width:265.2px;height:62.0px;border:2px solid #80a6b8;border-radius:3px;"></div>
<div class="t" style="left:3015.0px;top:476.5px;font-size:27.50px;color:#1c1c1c;font-weight:400;transform:scaleX(0.9887);transform-origin:0 0;">10.26.1.13</div>
<div class="r" style="left:2598.0px;top:553.0px;width:736.5px;height:82.5px;background:#a3a3a3;border-radius:7px;"></div>
<div class="t" style="left:2628.0px;top:577.0px;font-size:31.25px;color:#3e3a3a;font-weight:400;transform:scaleX(0.9843);transform-origin:0 0;-webkit-text-stroke:0.4px #3e3a3a;">RF Channel Assignment</div>
<div class="t" style="left:2624.0px;top:687.6px;font-size:29.65px;color:#193b40;font-weight:400;transform:scaleX(0.9541);transform-origin:0 0;">Current Channel</div>
<div class="t" style="left:2998.8px;top:689.4px;font-size:27.50px;color:#1f3a3f;font-weight:400;transform:scaleX(0.9400);transform-origin:0 0;">1</div>
<div class="t" style="left:2624.0px;top:769.8px;font-size:29.65px;color:#193b40;font-weight:400;transform:scaleX(0.9727);transform-origin:0 0;">Assignment Method</div>
<div class="r" style="left:2990.0px;top:756.7px;width:321.7px;height:53.2px;border:2px solid #5f8094;border-radius:8px;"></div>
<div class="t" style="left:3012.0px;top:766.9px;font-size:28.50px;color:#1c1c1c;font-weight:400;transform:scaleX(0.8898);transform-origin:0 0;">Global</div>
<svg class="r" style="left:3271.0px;top:782.9px;" width="17.0" height="11.5" viewBox="0 0 17.0 11.5"><polygon points="0,0 17,0 8.5,11.5" fill="#1c1c1c"/></svg>
<div class="r" style="left:2598.0px;top:841.5px;width:736.5px;height:81.5px;background:#a3a3a3;border-radius:7px;"></div>
<div class="t" style="left:2628.0px;top:864.9px;font-size:31.25px;color:#3e3a3a;font-weight:400;-webkit-text-stroke:0.4px #3e3a3a;">Tx Power Level Assignment</div>
<div class="t" style="left:2624.0px;top:975.7px;font-size:29.65px;color:#193b40;font-weight:400;transform:scaleX(0.9592);transform-origin:0 0;">Current Tx Power Level</div>
<div class="t" style="left:2998.8px;top:977.5px;font-size:27.50px;color:#1f3a3f;font-weight:400;transform:scaleX(0.9400);transform-origin:0 0;">1</div>
<div class="t" style="left:2624.0px;top:1057.9px;font-size:29.65px;color:#193b40;font-weight:400;transform:scaleX(0.9727);transform-origin:0 0;">Assignment Method</div>
<div class="r" style="left:2990.0px;top:1044.8px;width:321.7px;height:52.8px;border:2px solid #5f8094;border-radius:8px;"></div>
<div class="t" style="left:3012.0px;top:1054.9px;font-size:28.50px;color:#1c1c1c;font-weight:400;transform:scaleX(0.8898);transform-origin:0 0;">Global</div>
<svg class="r" style="left:3271.0px;top:1070.6px;" width="17.0" height="11.5" viewBox="0 0 17.0 11.5"><polygon points="0,0 17,0 8.5,11.5" fill="#1c1c1c"/></svg>
<div class="r" style="left:2598.0px;top:1128.6px;width:736.5px;height:80.8px;background:#a3a3a3;border-radius:7px;"></div>
<div class="t" style="left:2628.0px;top:1151.5px;font-size:31.25px;color:#3e3a3a;font-weight:400;transform:scaleX(0.9734);transform-origin:0 0;-webkit-text-stroke:0.4px #3e3a3a;">BSS Color</div>
<div class="t" style="left:2624.0px;top:1262.2px;font-size:29.65px;color:#193b40;font-weight:400;transform:scaleX(0.9550);transform-origin:0 0;">BSS Color</div>
<div class="t" style="left:2624.0px;top:1290.2px;font-size:29.65px;color:#193b40;font-weight:400;transform:scaleX(0.9550);transform-origin:0 0;">Configuration</div>
<div class="r" style="left:2990.0px;top:1249.8px;width:321.7px;height:52.2px;border:2px solid #5f8094;border-radius:8px;"></div>
<div class="t" style="left:3012.0px;top:1259.9px;font-size:28.50px;color:#1c1c1c;font-weight:400;transform:scaleX(0.8898);transform-origin:0 0;">Global</div>
<svg class="r" style="left:3271.0px;top:1275.0px;" width="17.0" height="11.5" viewBox="0 0 17.0 11.5"><polygon points="0,0 17,0 8.5,11.5" fill="#1c1c1c"/></svg>
<div class="t" style="left:2624.0px;top:1372.5px;font-size:29.65px;color:#193b40;font-weight:400;transform:scaleX(0.9467);transform-origin:0 0;">BSS Color Global</div>
<div class="t" style="left:2624.0px;top:1400.2px;font-size:29.65px;color:#193b40;font-weight:400;transform:scaleX(0.9585);transform-origin:0 0;">Admin Status</div>
<div class="t" style="left:2990.0px;top:1372.5px;font-size:29.65px;color:#1f3a3f;font-weight:400;transform:scaleX(0.9440);transform-origin:0 0;">Disabled</div>
<svg class="r" style="left:3116.0px;top:1377.0px;" width="22.5" height="21.5" viewBox="0 0 22.5 21.5"><rect x="0" y="0" width="22.5" height="21.5" rx="3.5" fill="#1d7ba3"/><path d="M6 15.5 L15.5 6 M9 5.5 L16 5.5 L16 12.5" fill="none" stroke="#a9b9c0" stroke-width="2.6"/></svg>
<div class="t" style="left:2624.0px;top:1482.3px;font-size:29.65px;color:#193b40;font-weight:400;transform:scaleX(0.9550);transform-origin:0 0;">BSS Color Radio</div>
<div class="t" style="left:2624.0px;top:1510.9px;font-size:29.65px;color:#193b40;font-weight:400;transform:scaleX(0.9558);transform-origin:0 0;">Operational Status</div>
<svg class="r" style="left:2876.5px;top:1515.5px;" width="24.0" height="24.0" viewBox="0 0 24.0 24.0"><circle cx="12" cy="12" r="11.8" fill="#1f3a3e"/><circle cx="12" cy="6.3" r="2" fill="#aaa"/><path d="M9.2 10 L13.6 10 L13.6 17 L15 17 L15 18.8 L9 18.8 L9 17 L10.6 17 L10.6 11.8 L9.2 11.8 Z" fill="#aaa"/></svg>
<div class="t" style="left:2990.0px;top:1481.9px;font-size:29.65px;color:#1f3a3f;font-weight:400;transform:scaleX(0.9440);transform-origin:0 0;">Disabled</div>
<div class="t" style="left:2624.0px;top:1592.9px;font-size:29.65px;color:#193b40;font-weight:400;transform:scaleX(0.9548);transform-origin:0 0;">BSS Color Radio Admin</div>
<div class="t" style="left:2624.0px;top:1620.9px;font-size:29.65px;color:#193b40;font-weight:400;transform:scaleX(0.9550);transform-origin:0 0;">Status</div>
<div class="r" style="left:2990.0px;top:1580.7px;width:206.0px;height:56.1px;border:2.5px solid #006600;border-radius:11px;"></div>
<div class="t" style="left:3002.0px;top:1597.8px;font-size:25.60px;color:#006400;font-weight:400;transform:scaleX(0.8867);transform-origin:0 0;-webkit-text-stroke:0.35px #006400;">ENABLED</div>
<div class="r" style="left:3147.0px;top:1588.0px;width:40.0px;height:37.7px;background:#005800;border-radius:7px;"></div>
<div class="r" style="left:1772.0px;top:1665.0px;width:1795.5px;height:2.0px;background:#7e7e7e;"></div>
<div class="r" style="left:1772.0px;top:1667.0px;width:1795.5px;height:116.5px;background:linear-gradient(#a9a9a9,#9c9c9c);"></div>
<div class="r" style="left:1792.3px;top:1687.3px;width:196.3px;height:67.1px;border:2.5px solid #3a5068;border-radius:11px;"></div>
<svg class="r" style="left:1829.0px;top:1709.0px;" width="27.0" height="27.0" viewBox="0 0 27.0 27.0"><path d="M6.5 9 A10 10 0 1 1 5 17" fill="none" stroke="#3a5068" stroke-width="4"/><polygon points="1.5,2 1.5,13 12.5,13" fill="#3a5068"/></svg>
<div class="t" style="left:1863.0px;top:1705.0px;font-size:29.90px;color:#3a5068;font-weight:400;transform:scaleX(0.9304);transform-origin:0 0;">Cancel</div>
<div class="r" style="left:3079.8px;top:1680.0px;width:473.8px;height:90.0px;background:#f5f5f5;border-radius:14px;"></div>
<div class="r" style="left:3087.0px;top:1686.8px;width:461.0px;height:77.0px;background:#526b80;border-radius:11px;"></div>
<svg class="r" style="left:3132.0px;top:1708.5px;" width="34.0" height="35.5" viewBox="0 0 34.0 35.5"><path d="M1 3 Q1 1 3 1 L28 1 L32.5 5.5 L32.5 32.5 Q32.5 34.5 30.5 34.5 L3 34.5 Q1 34.5 1 32.5 Z" fill="none" stroke="#dfe5ea" stroke-width="1.4"/><path d="M13 1 L13 7.5 Q13 9 14.5 9 L26.5 9 Q28 9 28 7.5 L28 1" fill="none" stroke="#dfe5ea" stroke-width="1.4"/><rect x="24" y="2.8" width="1.6" height="4.6" fill="#dfe5ea"/><path d="M5 34.5 L5 15 Q5 13.5 6.5 13.5 L27 13.5 Q28.5 13.5 28.5 15 L28.5 34.5" fill="none" stroke="#dfe5ea" stroke-width="1.4"/><path d="M16.8 29 L16.8 20 M13.5 23 L16.8 19.6 L20.1 23" fill="none" stroke="#dfe5ea" stroke-width="1.4"/></svg>
<div class="t" style="left:3181.0px;top:1713.2px;font-size:31.20px;color:#ffffff;font-weight:400;transform:scaleX(0.9244);transform-origin:0 0;">Update &amp; Apply to Device</div>
</body></html>
